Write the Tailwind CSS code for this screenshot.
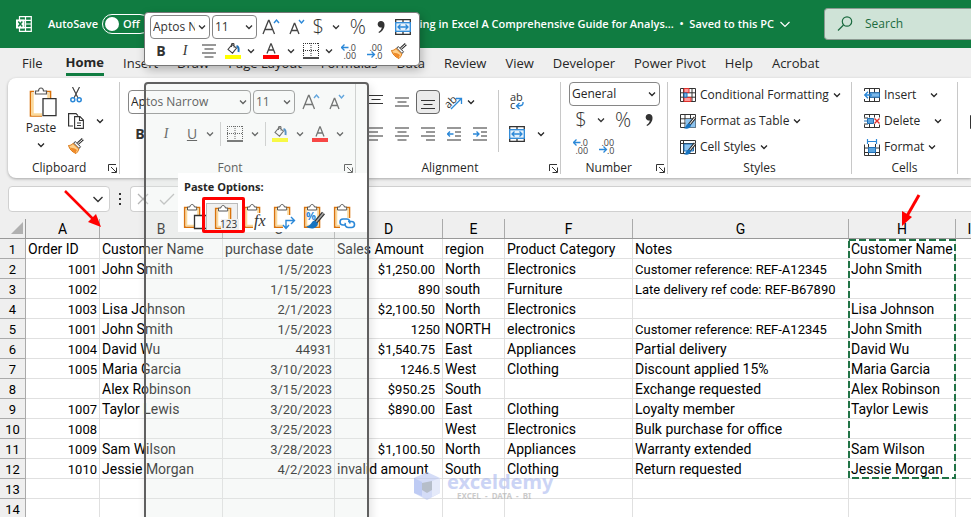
<!DOCTYPE html>
<html lang="en">
<head>
    <meta charset="UTF-8">
    <meta name="viewport" content="width=device-width, initial-scale=1.0">
    <title>Data Cleaning in Excel</title>
    <script src="https://cdn.jsdelivr.net/npm/@tailwindcss/browser@4"></script>
</head>
<body class="relative h-screen overflow-hidden bg-[#efefef] font-['Open_Sans','Noto_Sans',sans-serif] text-xs text-[#262626]">

    <!-- Icon set -->
    <svg class="hidden">
        <symbol id="chev" viewBox="0 0 8 6"><path d="M1 1.5l3 3 3-3" fill="none" stroke="currentColor" stroke-width="1.3"/></symbol>
        <symbol id="launcher" viewBox="0 0 9 9"><path d="M.5 7V.5H8M3 3l5 5M8.500 3.500v5h-5" fill="none" stroke="#333"/></symbol>
        <symbol id="grow" viewBox="0 0 18 18"><path d="M1 16L6.500 2.500h.6L12.500 16M3 11.500h7.800" fill="none" stroke="#444" stroke-width="1.3"/><path d="M12 5l2.500-3L17 5" fill="none" stroke="#2b88d8" stroke-width="1.4"/></symbol>
        <symbol id="shrink" viewBox="0 0 18 18"><path d="M2 16L6.300 5.500h.5L11 16M3.500 12.500h6" fill="none" stroke="#444" stroke-width="1.3"/><path d="M11 2l2.500 3L16 2" fill="none" stroke="#2b88d8" stroke-width="1.4"/></symbol>
        <symbol id="fill" viewBox="0 0 16 16"><rect y="12" width="16" height="4" fill="#ff0"/><path d="M7 1.500L3 6.500l4.500 3.700 4-5.200L7 1.500zM6.500 4V1.500c0-1.500 2.500-1.500 2.500 0v3" fill="none" stroke="#444" stroke-width="1.1"/><path d="M11.500 3c2 .5 2.500 2.500 2 6" fill="none" stroke="#1f6fb5" stroke-width="2"/></symbol>
        <symbol id="fontcolor" viewBox="0 0 16 16"><rect y="12" width="16" height="4" fill="red"/><path d="M4 10.500L7.800 .8h.4L12 10.500M5.300 7h5.400" fill="none" stroke="#444" stroke-width="1.3"/></symbol>
        <symbol id="borders" viewBox="0 0 16 16"><path d="M0 .5h16M.5 0v14M15.500 0v14M8 0v14M0 7.500h16" fill="none" stroke="#333" stroke-dasharray="1 1"/><path d="M0 15h16" stroke="#111" stroke-width="1.500"/></symbol>
        <symbol id="merge" viewBox="0 0 16 16"><path d="M.7 3.500V.7h14.600v2.800M8 .7v2.500M.7 12.500v2.800h14.600v-2.800M8 12.800v2.500" fill="none" stroke="#333" stroke-width="1.3"/><rect x=".7" y="3.700" width="14.600" height="8.600" fill="#e6f2fb" stroke="#2b88d8" stroke-width="1.3"/><path d="M3 8h10M5.500 5.500L3 8l2.500 2.500M10.500 5.500L13 8l-2.500 2.500" fill="none" stroke="#2b88d8" stroke-width="1.3"/></symbol>
        <symbol id="incdec" viewBox="0 0 16 16"><path d="M0.500 4.500h7M3.500 1.500l-3 3 3 3" fill="none" stroke="#2b88d8" stroke-width="1.3"/><text x="7.500" y="7.500" font-size="9" fill="#444">.0</text><text x="2.500" y="16" font-size="9" fill="#444">.00</text></symbol>
        <symbol id="decdec" viewBox="0 0 16 16"><path d="M0 11.500h7M4.500 8.500l3 3-3 3" fill="none" stroke="#2b88d8" stroke-width="1.3"/><text x="2.500" y="7.500" font-size="9" fill="#444">.00</text><text x="8" y="16" font-size="9" fill="#444">.0</text></symbol>
        <symbol id="brush" viewBox="0 0 16 16"><path d="M14.800 1.200L10 5.500" stroke="#333" stroke-width="3"/><path d="M14.600 1.400L10 5.500" stroke="#fff" stroke-width="1"/><path d="M5.500 5l5.500 5.500 1.500-1.800L7.300 3.700z" fill="#fff" stroke="#333"/><path d="M5 5.500C3.500 7 2 7.500.5 7.500c1 3.500 3.500 6.500 7.500 8 1.500-1.300 2.500-3 2.800-4.500z" fill="#ffd08a" stroke="#d9730d"/><path d="M2 9.500c3 .8 5 .5 7 2.500-1 1.500-1 2.500-1.500 3.200C5 14 3 12 2 9.500z" fill="#ef8a28"/></symbol>
        <symbol id="center" viewBox="0 0 14 14"><path d="M0 1h14M2.500 5h9M0 9h14M2.500 13h9" stroke="#333" stroke-width="1.2"/></symbol>
        <symbol id="left" viewBox="0 0 14 14"><path d="M0 1h14M0 5h9M0 9h14M0 13h9" stroke="#333" stroke-width="1.2"/></symbol>
        <symbol id="right" viewBox="0 0 14 14"><path d="M0 1h14M5 5h9M0 9h14M5 13h9" stroke="#333" stroke-width="1.2"/></symbol>
        <symbol id="vtop" viewBox="0 0 14 14"><path d="M0 .5h14M2.500 4.500h9M0 8.500h14" stroke="#333" stroke-width="1.2"/></symbol>
        <symbol id="vmid" viewBox="0 0 14 14"><path d="M0 3h14M2.500 7h9M0 11h14" stroke="#333" stroke-width="1.2"/></symbol>
        <symbol id="vbot" viewBox="0 0 14 14"><path d="M0 5.500h14M2.500 9.500h9M0 13.500h14" stroke="#333" stroke-width="1.2"/></symbol>
        <symbol id="outdent" viewBox="0 0 14 14"><path d="M0 1h14M8 5h6M8 9h6M0 13h14" stroke="#333" stroke-width="1.2"/><path d="M0.500 7h6M3 4.500L.5 7 3 9.500" fill="none" stroke="#2b88d8" stroke-width="1.3"/></symbol>
        <symbol id="indent" viewBox="0 0 14 14"><path d="M0 1h14M8 5h6M8 9h6M0 13h14" stroke="#333" stroke-width="1.2"/><path d="M0 7h6M3.500 4.500L6 7 3.500 9.500" fill="none" stroke="#2b88d8" stroke-width="1.3"/></symbol>
        <symbol id="orient" viewBox="0 0 18 18"><text x="-1" y="13" font-size="11" fill="#333" transform="rotate(-45 5 9)">ab</text><path d="M6 16L16 6M11 5.500h5.500V11" fill="none" stroke="#2b88d8" stroke-width="1.3"/></symbol>
        <symbol id="wrap" viewBox="0 0 16 18"><text x="1" y="8" font-size="11" fill="#333">ab</text><text x="1" y="16" font-size="11" fill="#333">c</text><path d="M14 9c.5 3-1 4-6 4M10.500 10L7.500 13l3 3" fill="none" stroke="#2b88d8" stroke-width="1.4"/></symbol>
        <symbol id="clip" viewBox="0 0 28 28"><path d="M6 4.500H2.700v19.800H17.500V4.500H14" fill="#fff" stroke="#d9730d" stroke-width="1.6"/><path d="M4.500 6h11.500v16.500H4.500z" fill="none" stroke="#fbd99a" stroke-width="1.6"/><path d="M5.500 7V4h2.300c.3-3.300 4.300-3.300 4.600 0h2.300v3z" fill="#fff" stroke="#555"/></symbol>
        <symbol id="condfmt" viewBox="0 0 16 14"><path d="M.5.5h15v13H.5zM.5 4.800h15M.5 9.200h15M3.500.5v13M12 .5v13" fill="#fff" stroke="#333"/><path d="M4 .5h5v4H4zM4 9.500h7v4H4z" fill="#ff9a9a" stroke="#e0302c"/><path d="M4 5h3v4.200H4z" fill="#7db8e8" stroke="#1f6fb5"/></symbol>
        <symbol id="fmttable" viewBox="0 0 16 15"><path d="M.5.5h15v13H.5zM.5 4.800h15M.5 9.200h15M5 .5v13M10.500.5v13" fill="#fff" stroke="#333"/><path d="M5.500 5h10v8.500h-10z" fill="#8cc3ef"/><path d="M15 3.500L9 11" stroke="#333" stroke-width="3"/><path d="M15 3.500L9 11" stroke="#fff"/><path d="M9.500 9.500c-4 0-2.500 4-6 4.500 3 1.500 7 .8 7.500-3z" fill="#1673c0"/></symbol>
        <symbol id="cellstyle" viewBox="0 0 16 15"><path d="M.5.5h15v13H.5zM.5 3.500h15M3.500.5v13" fill="#fff" stroke="#333"/><path d="M4 4h9.500v7H4z" fill="#8cc3ef" stroke="#1f6fb5"/><path d="M15 3.500L9 11" stroke="#333" stroke-width="3"/><path d="M15 3.500L9 11" stroke="#fff"/><path d="M9.500 9.500c-4 0-2.500 4-6 4.500 3 1.500 7 .8 7.500-3z" fill="#1673c0"/></symbol>
        <symbol id="insert" viewBox="0 0 16 14"><path d="M.5 3V.5h15v13H.5V11M5.500.5v13M10.500.5v13M5 4.800h10.500M5 9.200h10.500" fill="none" stroke="#333"/><path d="M6 4.800h9.500v4.400H6z" fill="#7db8e8" stroke="#1f6fb5"/><path d="M0.800 7H8M4 3.800L.8 7 4 10.200" fill="none" stroke="#2b88d8" stroke-width="1.4"/></symbol>
        <symbol id="delete" viewBox="0 0 16 14"><path d="M.5 3.500V.5h15v3M.5 10.500v3h15v-3M5.500.5v3M10.500.5v3M5.500 10v3.500M10.500 10v3.500M0 4h4M0 10h4" fill="none" stroke="#333"/><path d="M3.500 4.500h6v5h-6zM0 7h3.500" fill="#5aa5e0" stroke="#1f6fb5"/><path d="M10.500 4.500l5 5M15.500 4.500l-5 5" stroke="#e0302c" stroke-width="1.400"/></symbol>
        <symbol id="format" viewBox="0 0 16 17"><path d="M.5 5.500v11h15v-11M.5 9h15M.5 13.500h15M4.500 5v11.500M11.500 5v11.500" fill="none" stroke="#333"/><path d="M4.500 8.500h7v5h-7z" fill="#5aa5e0" stroke="#1f6fb5"/><path d="M3 2.500h10M3.500 0v5M12.500 0v5" stroke="#2b88d8" stroke-width="1.2"/></symbol>
    </svg>

    <!-- Title bar -->
    <header class="flex h-12 items-center bg-[#107c41] pl-4 text-white">
        <svg class="size-4 shrink-0" viewBox="0 0 16 16"><path d="M3.500.7h11.800v14.600H3.500zM3.500 4.300h12M9 8h6.500M3.500 11.700h12M9.500.7v14.600" fill="none" stroke="#fff" stroke-width="1.2"/><path d="M0 3.500h8.500v9H0z" fill="#fff"/><path d="M2.300 5.500l4 5M6.300 5.500l-4 5" stroke="#107c41" stroke-width="1.4"/></svg>
        <label for="autosave" class="ml-4 text-[11px] font-semibold">AutoSave</label>
        <button id="autosave" role="switch" aria-checked="false" class="ml-1 flex h-5 w-12 shrink-0 items-center gap-1 rounded-full border border-white pl-0.5 text-[11px] font-semibold"><span class="size-3.5 shrink-0 rounded-full bg-white"></span>Off</button>
        <div class="flex min-w-0 flex-1 items-center justify-end gap-1.5 whitespace-nowrap text-[11px] font-semibold">
            <span>Data Cleaning in Excel A Comprehensive Guide for Analys... &nbsp;•&nbsp; Saved to this PC</span>
            <svg class="h-2 w-2.5" viewBox="0 0 10 8"><path d="M.5 2L5 6.500 9.500 2" fill="none" stroke="#fff" stroke-width="1.2"/></svg>
        </div>
        <label class="ml-[34px] flex h-8 w-[147px] shrink-0 items-center rounded-l border border-r-0 border-[#8c9a92] bg-[#cfe3d7] pl-3">
            <svg class="size-4 shrink-0" viewBox="0 0 16 16"><circle cx="10" cy="5.500" r="4.700" fill="none" stroke="#1c6b40" stroke-width="1.2"/><path d="M6.500 9L1 14.500" stroke="#1c6b40" stroke-width="1.300"/></svg>
            <input type="text" aria-label="Search" placeholder="Search" class="ml-3 w-20 text-xs outline-none placeholder:text-[#1c6b40]">
        </label>
    </header>

    <!-- Ribbon tabs -->
    <nav class="flex h-[30px] items-center gap-[19px] pl-[22px] text-[13px] leading-[22px] whitespace-nowrap">
        <a href="#">File</a>
        <a href="#" class="ml-1 border-b-3 border-[#107c41] font-bold">Home</a>
        <a href="#">Insert</a>
        <a href="#">Draw</a>
        <a href="#">Page Layout</a>
        <a href="#">Formulas</a>
        <a href="#">Data</a>
        <a href="#">Review</a>
        <a href="#">View</a>
        <a href="#">Developer</a>
        <a href="#">Power Pivot</a>
        <a href="#">Help</a>
        <a href="#">Acrobat</a>
    </nav>

    <!-- Ribbon -->
    <section class="ml-2 flex overflow-hidden rounded-l-lg bg-white py-1 shadow-[0_1px_3px_rgba(0,0,0,0.3)]">
        <div class="flex h-[92px] w-28 shrink-0 flex-col border-r border-[#c8c8c8]">
            <div class="flex flex-1">
                <button class="ml-3 flex w-[42px] flex-col items-center pt-1">
                    <svg class="h-8 w-8" viewBox="0 0 32 32"><path d="M9 5.500H5.500v24.500H17M21 5.500h4.500V12" fill="none" stroke="#d9730d" stroke-width="1.600"/><path d="M7.500 7v21.500H17M23.500 7v5" fill="none" stroke="#fbd99a" stroke-width="2.500"/><path d="M10.500 8V5h3c.3-4 4.700-4 5 0h3v3z" fill="#fff" stroke="#555" stroke-width="1.200"/><path d="M18 12.700h13v17H18z" fill="#fff" stroke="#333" stroke-width="1.300"/></svg>
                    <span class="mt-0.5 leading-4">Paste</span>
                    <svg class="mt-1.5 h-1.5 w-2"><use href="#chev"/></svg>
                </button>
                <div class="ml-1.5 flex flex-col">
                    <button class="flex h-[26px] w-4 items-center justify-center" aria-label="Cut"><svg class="h-4 w-3" viewBox="0 0 12 16"><path d="M2.500 0l5.500 11M9.500 0L4 11" stroke="#444" stroke-width="1.200"/><circle cx="2.800" cy="12.800" r="2" fill="#fff" stroke="#2b88d8" stroke-width="1.500"/><circle cx="9.200" cy="12.800" r="2" fill="#fff" stroke="#2b88d8" stroke-width="1.500"/></svg></button>
                    <button class="flex h-[26px] items-center gap-3" aria-label="Copy"><svg class="size-4" viewBox="0 0 16 16"><path d="M5 13H.6V.6H8l2 2" fill="none" stroke="#333" stroke-width="1.200"/><path d="M6.600 3.600H12l3.400 3.400v8.400H6.600zM11.500 4v3.500h3.500M9 10h4M9 12.500h4" fill="#fff" stroke="#333" stroke-width="1.100"/></svg><svg class="h-1.5 w-2"><use href="#chev"/></svg></button>
                    <button class="flex h-6 items-center" aria-label="Format Painter"><svg class="size-4"><use href="#brush"/></svg></button>
                </div>
            </div>
            <div class="flex h-3 items-center pl-6 leading-3"><span class="flex-1">Clipboard</span><button class="mr-0.5" aria-label="Clipboard settings"><svg class="size-[9px]"><use href="#launcher"/></svg></button></div>
        </div>

        <div class="flex h-[92px] w-[236px] shrink-0 flex-col border-r border-[#c8c8c8] pl-2">
            <div class="flex-1 pt-2">
                <div class="flex h-6 items-center">
                    <label class="relative flex h-6 w-[123px] items-center"><select aria-label="Font" class="h-6 w-full appearance-none rounded border border-[#868686] bg-white pl-0.5 text-xs"><option>Aptos Narrow</option></select><svg class="absolute right-1 h-1.5 w-2"><use href="#chev"/></svg></label>
                    <label class="relative ml-0.5 flex h-6 w-[42px] items-center"><select aria-label="Font size" class="h-6 w-full appearance-none rounded border border-[#868686] bg-white pl-0.5 text-xs"><option>11</option></select><svg class="absolute right-1 h-1.5 w-2"><use href="#chev"/></svg></label>
                    <button class="flex w-8 justify-center" aria-label="Increase font size"><svg class="size-[18px]"><use href="#grow"/></svg></button>
                    <button class="flex w-5 justify-center" aria-label="Decrease font size"><svg class="size-[18px]"><use href="#shrink"/></svg></button>
                </div>
                <div class="mt-2 flex h-6 items-center text-sm text-[#333]">
                    <button class="w-6 font-bold">B</button>
                    <button class="w-7 font-['Liberation_Serif',serif] italic">I</button>
                    <button class="w-6 underline">U</button>
                    <button class="flex w-3 justify-center" aria-label="Underline options"><svg class="h-1.5 w-2"><use href="#chev"/></svg></button>
                    <span class="ml-1 h-6 w-px bg-[#c8c8c8]"></span>
                    <button class="flex w-7 justify-center" aria-label="Borders"><svg class="size-4"><use href="#borders"/></svg></button>
                    <button class="flex w-3 justify-center" aria-label="Border options"><svg class="h-1.5 w-2"><use href="#chev"/></svg></button>
                    <span class="ml-1 h-6 w-px bg-[#c8c8c8]"></span>
                    <button class="flex w-7 justify-center" aria-label="Fill color"><svg class="size-4"><use href="#fill"/></svg></button>
                    <button class="flex w-3 justify-center" aria-label="Fill options"><svg class="h-1.5 w-2"><use href="#chev"/></svg></button>
                    <button class="flex w-7 justify-center" aria-label="Font color"><svg class="size-4"><use href="#fontcolor"/></svg></button>
                    <button class="flex w-3 justify-center" aria-label="Font color options"><svg class="h-1.5 w-2"><use href="#chev"/></svg></button>
                </div>
            </div>
            <div class="flex h-3 items-center leading-3"><span class="flex-1 pr-3 text-center">Font</span><button class="mr-0.5" aria-label="Font settings"><svg class="size-[9px]"><use href="#launcher"/></svg></button></div>
        </div>

        <div class="flex h-[92px] w-[205px] shrink-0 flex-col border-r border-[#c8c8c8] pl-[7px]">
            <div class="flex flex-1 pt-2">
                <div class="w-[135px]">
                    <div class="flex h-6 items-center">
                        <button class="flex w-[26px] justify-center" aria-label="Top align"><svg class="size-3.5"><use href="#vtop"/></svg></button>
                        <button class="flex w-[26px] justify-center" aria-label="Middle align"><svg class="size-3.5"><use href="#vmid"/></svg></button>
                        <button class="mx-px flex size-6 items-center justify-center rounded border border-[#666] bg-[#ebebeb]" aria-label="Bottom align"><svg class="size-3.5"><use href="#vbot"/></svg></button>
                        <button class="flex w-[26px] justify-center" aria-label="Orientation"><svg class="size-[18px]"><use href="#orient"/></svg></button>
                        <button class="flex w-2 justify-center" aria-label="Orientation options"><svg class="h-1.5 w-2"><use href="#chev"/></svg></button>
                    </div>
                    <div class="mt-2 flex h-6 items-center">
                        <button class="flex w-[26px] justify-center" aria-label="Align left"><svg class="size-3.5"><use href="#left"/></svg></button>
                        <button class="flex w-[26px] justify-center" aria-label="Center"><svg class="size-3.5"><use href="#center"/></svg></button>
                        <button class="flex w-[26px] justify-center" aria-label="Align right"><svg class="size-3.5"><use href="#right"/></svg></button>
                        <button class="flex w-[26px] justify-center" aria-label="Decrease indent"><svg class="size-3.5"><use href="#outdent"/></svg></button>
                        <button class="flex w-[26px] justify-center" aria-label="Increase indent"><svg class="size-3.5"><use href="#indent"/></svg></button>
                    </div>
                </div>
                <div class="h-[62px] border-l border-[#c8c8c8] pl-2.5">
                    <button class="flex h-6 items-center" aria-label="Wrap text"><svg class="h-[18px] w-4"><use href="#wrap"/></svg></button>
                    <div class="mt-2 flex h-6 items-center gap-3">
                        <button aria-label="Merge and center"><svg class="size-4"><use href="#merge"/></svg></button>
                        <button aria-label="Merge options"><svg class="h-1.5 w-2"><use href="#chev"/></svg></button>
                    </div>
                </div>
            </div>
            <div class="flex h-3 items-center leading-3"><span class="flex-1 pr-3 text-center">Alignment</span><button class="mr-0.5" aria-label="Alignment settings"><svg class="size-[9px]"><use href="#launcher"/></svg></button></div>
        </div>

        <div class="flex h-[92px] w-[107px] shrink-0 flex-col border-r border-[#c8c8c8] pl-2">
            <div class="flex-1">
                <label class="relative flex h-6 w-[91px] items-center"><select aria-label="Number format" class="h-6 w-full appearance-none rounded border border-[#868686] bg-white pl-0.5 text-xs"><option>General</option></select><svg class="absolute right-1 h-1.5 w-2"><use href="#chev"/></svg></label>
                <div class="flex h-7 items-center text-xl font-light text-[#333]">
                    <button class="w-6">$</button>
                    <button class="flex w-4 justify-center" aria-label="Accounting options"><svg class="h-1.5 w-2"><use href="#chev"/></svg></button>
                    <button class="w-7">%</button>
                    <button class="flex w-6 justify-center" aria-label="Comma style"><svg class="h-3 w-2" viewBox="0 0 8 12"><path d="M4 0a3.300 3.300 0 1 0 .8 6.500C4.500 8.500 3 10 1.500 11l.5 1C5 10.500 7.700 7.500 7.500 3.500 7.400 1.200 6 0 4 0z" fill="#333"/></svg></button>
                </div>
                <div class="flex h-6 items-center">
                    <button class="flex w-6 justify-center" aria-label="Increase decimal"><svg class="size-4"><use href="#incdec"/></svg></button>
                    <button class="flex w-7 justify-center" aria-label="Decrease decimal"><svg class="size-4"><use href="#decdec"/></svg></button>
                </div>
            </div>
            <div class="flex h-3 items-center leading-3"><span class="flex-1 pr-3 text-right">Number</span><button class="mr-0.5 ml-3" aria-label="Number settings"><svg class="size-[9px]"><use href="#launcher"/></svg></button></div>
        </div>

        <div class="flex h-[92px] w-[184px] shrink-0 flex-col border-r border-[#c8c8c8] pl-3 whitespace-nowrap">
            <div class="flex-1">
                <button class="flex h-[26px] items-center gap-1"><svg class="h-3.5 w-4"><use href="#condfmt"/></svg>Conditional Formatting<svg class="h-1.5 w-2"><use href="#chev"/></svg></button>
                <button class="flex h-[26px] items-center gap-1"><svg class="h-[15px] w-4"><use href="#fmttable"/></svg>Format as Table<svg class="h-1.5 w-2"><use href="#chev"/></svg></button>
                <button class="flex h-[26px] items-center gap-1"><svg class="h-[15px] w-4"><use href="#cellstyle"/></svg>Cell Styles<svg class="h-1.5 w-2"><use href="#chev"/></svg></button>
            </div>
            <div class="h-3 pr-3 text-center leading-3">Styles</div>
        </div>

        <div class="flex h-[92px] w-[106px] shrink-0 flex-col border-r border-[#c8c8c8] pl-3 whitespace-nowrap">
            <div class="flex-1">
                <button class="flex h-[26px] w-[74px] items-center gap-1"><svg class="h-3.5 w-4"><use href="#insert"/></svg>Insert<svg class="ml-auto h-1.5 w-2"><use href="#chev"/></svg></button>
                <button class="flex h-[26px] w-[78px] items-center gap-1"><svg class="h-3.5 w-4"><use href="#delete"/></svg>Delete<svg class="ml-auto h-1.5 w-2"><use href="#chev"/></svg></button>
                <button class="flex h-[26px] items-center gap-1"><svg class="h-[17px] w-4"><use href="#format"/></svg>Format<svg class="h-1.5 w-2"><use href="#chev"/></svg></button>
            </div>
            <div class="h-3 pr-3 text-center leading-3">Cells</div>
        </div>

        <div class="flex flex-1 flex-col pt-8 pl-3"><button aria-label="Fill"><svg class="size-4" viewBox="0 0 16 16"><path d="M.5 1.500h14v13H.5z" fill="none" stroke="#333"/></svg></button></div>
    </section>

    <!-- Formula bar -->
    <section class="mt-2 flex h-[26px] pl-2">
        <label class="flex w-[102px] items-center rounded border border-[#d0d0d0] bg-white pr-1.5">
            <input type="text" aria-label="Name box" class="w-20 flex-1 outline-none">
            <svg class="h-2 w-2.5" viewBox="0 0 10 8"><path d="M.5 2L5 6.500 9.500 2" fill="none" stroke="#333" stroke-width="1.400"/></svg>
        </label>
        <div class="flex w-5 flex-col items-center justify-center gap-[3px]"><span class="size-0.5 bg-[#333]"></span><span class="size-0.5 bg-[#333]"></span><span class="size-0.5 bg-[#333]"></span></div>
        <div class="flex flex-1 items-center gap-2.5 rounded-l border border-r-0 border-[#d0d0d0] bg-white pl-1.5">
            <button aria-label="Cancel"><svg class="size-3" viewBox="0 0 12 12"><path d="M1 1l10 10M11 1L1 11" stroke="#b5b5b5" stroke-width="1.300"/></svg></button>
            <button aria-label="Enter"><svg class="h-3 w-4" viewBox="0 0 16 12"><path d="M1 7l4 4L15 1" fill="none" stroke="#b5b5b5" stroke-width="1.300"/></svg></button>
            <input type="text" aria-label="Formula" class="flex-1 outline-none">
        </div>
    </section>

    <!-- Worksheet -->
    <table class="w-[984px] table-fixed border-separate border-spacing-0 bg-white font-['Roboto','Open_Sans',sans-serif] text-sm whitespace-nowrap text-black">
        <colgroup>
            <col class="w-[26px]"><col class="w-[74px]"><col class="w-[123px]"><col class="w-28"><col class="w-[108px]"><col class="w-[62px]"><col class="w-32"><col class="w-[216px]"><col class="w-[107px]"><col class="w-7">
        </colgroup>
        <thead><tr id="head" class="bg-[#efefef]"></tr></thead>
        <tbody id="rows"></tbody>
    </table>

    <!-- Watermark -->
    <div class="absolute top-[472px] left-[413px] flex items-center gap-1.5 opacity-60">
        <svg class="h-7 w-7" viewBox="0 0 28 28"><path d="M14 0l13 6v15l-13 7-13-7V6z" fill="#b9c6f2"/><path d="M1 6l8 4v14l-8-3z" fill="#94a9ee"/><path d="M9 11l10-2v9l-5 3-5-3z" fill="#8793a8"/><path d="M19 9l8-3v15l-8 4z" fill="#d5ddf8"/></svg>
        <div class="font-['Noto_Sans',sans-serif]">
            <div class="text-xl leading-5 font-bold text-[#aab8f0]">exceldemy</div>
            <div class="pl-2.5 text-[8px] leading-2 font-bold text-[#aaa]">EXCEL &nbsp;- &nbsp;DATA &nbsp;- &nbsp;BI</div>
        </div>
    </div>

    <!-- Context menu, faded except for the paste options -->
    <div class="absolute top-[82px] -bottom-2 left-[144px] w-[225px] rounded border-2 border-[#606060] bg-[#e6ebe9]/30 shadow-[2px_4px_10px_rgba(0,0,0,0.12)]">
        <div class="mt-[89px] ml-8 h-[59px] bg-white">
            <h2 class="pt-1.5 pl-1.5 text-[11px] leading-4 font-bold">Paste Options:</h2>
            <div class="mt-2 flex h-7">
                <button class="w-7 pl-1" aria-label="Paste"><svg class="size-7" viewBox="0 0 28 28"><use href="#clip" width="28" height="28"/><path d="M12.500 12.500h12v13h-12z" fill="#fff" stroke="#333" stroke-width="1.300"/></svg></button>
                <button class="w-8 border border-[#bbb] bg-[#f0f0f0] pl-1.5" aria-label="Values"><svg class="size-7" viewBox="0 0 28 28"><use href="#clip" width="28" height="28"/><path d="M8 15h18v11H8z" fill="#f0f0f0"/><text x="7" y="24" font-size="10" fill="#333">123</text></svg></button>
                <button class="w-[30px] pl-1" aria-label="Formulas"><svg class="size-7" viewBox="0 0 28 28"><use href="#clip" width="28" height="28"/><path d="M11 10h10v16H11z" fill="#fff"/><text x="12" y="23" font-size="16" font-style="italic" font-family="Liberation Serif" fill="#333">fx</text></svg></button>
                <button class="w-[30px] pl-1" aria-label="Transpose"><svg class="size-7" viewBox="0 0 28 28"><use href="#clip" width="28" height="28"/><path d="M11 12h12v14H11z" fill="#fff"/><path d="M14 25v-7.500h8M11 22l3 3.500 3-3.500M19 14l3.500 3.500L19 21" fill="none" stroke="#2b88d8" stroke-width="1.400"/></svg></button>
                <button class="w-[30px] pl-1" aria-label="Formatting"><svg class="size-7" viewBox="0 0 28 28"><use href="#clip" width="28" height="28"/><text x="4" y="17" font-size="11" font-weight="bold" fill="#2b88d8">%</text><path d="M21.500 10L13 20" stroke="#333" stroke-width="4"/><path d="M21.500 10L14 19" stroke="#aaa" stroke-width="1.500"/><path d="M13 17.500c-4 0-3 5-9 6 4 3 11 3 12-3z" fill="#1673c0"/></svg></button>
                <button class="w-[30px] pl-1" aria-label="Paste link"><svg class="size-7" viewBox="0 0 28 28"><use href="#clip" width="28" height="28"/><path d="M8 15h16v11H8z" fill="#fff"/><path d="M13 22h-2a3 3 0 0 1 0-6h4a3 3 0 0 1 2.500 4.500M16 18.500h3.500a3 3 0 0 1 0 6H16a3 3 0 0 1-2.500-4.500" fill="none" stroke="#2b88d8" stroke-width="1.600"/></svg></button>
            </div>
        </div>
    </div>
    <div class="absolute top-[197px] left-[202px] h-9 w-[43px] rounded-xs border-3 border-[#f00]"></div>

    <!-- Arrows -->
    <svg class="absolute top-[188px] left-[62px] h-10 w-10" viewBox="0 0 40 40"><path d="M3 3l28 28" stroke="red" stroke-width="2.500"/><path d="M39 39l-13-5 8-8z" fill="red"/></svg>
    <svg class="absolute top-[192px] left-[898px] h-9 w-6" viewBox="0 0 24 36"><path d="M21 3L9 24" stroke="red" stroke-width="3"/><path d="M4 34l0-15 10 6z" fill="red"/></svg>

    <!-- Mini toolbar -->
    <div class="absolute top-3 left-[144px] w-[276px] rounded border border-[#777] bg-white px-1 pt-0.5 pb-0.5 shadow-[2px_4px_10px_rgba(0,0,0,0.25)]">
        <div class="flex h-6 items-center pl-px text-xl font-light text-[#333]">
            <label class="relative flex h-6 w-[60px] shrink-0 items-center"><select aria-label="Font name" class="h-6 w-full appearance-none rounded border border-[#868686] bg-white pr-3.5 pl-0.5 text-xs font-normal"><option>Aptos Narrow</option></select><svg class="absolute right-1 h-1.5 w-2"><use href="#chev"/></svg></label>
            <label class="relative ml-0.5 flex h-6 w-[45px] shrink-0 items-center"><select aria-label="Size" class="h-6 w-full appearance-none rounded border border-[#868686] bg-white pl-0.5 text-xs font-normal"><option>11</option></select><svg class="absolute right-1 h-1.5 w-2"><use href="#chev"/></svg></label>
            <button class="flex w-7 justify-center" aria-label="Grow font"><svg class="size-[18px]"><use href="#grow"/></svg></button>
            <button class="flex w-6 justify-center" aria-label="Shrink font"><svg class="size-[18px]"><use href="#shrink"/></svg></button>
            <button class="w-5">$</button>
            <button class="flex w-4 justify-center" aria-label="Currency options"><svg class="h-1.5 w-2"><use href="#chev"/></svg></button>
            <button class="w-7">%</button>
            <button class="flex w-5 justify-center" aria-label="Comma"><svg class="h-3 w-2" viewBox="0 0 8 12"><path d="M4 0a3.300 3.300 0 1 0 .8 6.500C4.500 8.500 3 10 1.500 11l.5 1C5 10.500 7.700 7.500 7.500 3.500 7.400 1.200 6 0 4 0z" fill="#333"/></svg></button>
            <button class="flex w-6 justify-center" aria-label="Merge"><svg class="size-4"><use href="#merge"/></svg></button>
        </div>
        <div class="flex h-6 items-center text-sm text-[#333]">
            <button class="w-6 font-bold">B</button>
            <button class="w-6 font-['Liberation_Serif',serif] italic">I</button>
            <button class="flex w-6 justify-center" aria-label="Align center"><svg class="size-3.5"><use href="#center"/></svg></button>
            <button class="flex w-6 justify-center" aria-label="Fill"><svg class="size-4"><use href="#fill"/></svg></button>
            <button class="flex w-3 justify-center" aria-label="More fills"><svg class="h-1.5 w-2"><use href="#chev"/></svg></button>
            <button class="flex w-7 justify-center" aria-label="Text color"><svg class="size-4"><use href="#fontcolor"/></svg></button>
            <button class="flex w-3 justify-center" aria-label="More colors"><svg class="h-1.5 w-2"><use href="#chev"/></svg></button>
            <button class="flex w-7 justify-center" aria-label="Border"><svg class="size-4"><use href="#borders"/></svg></button>
            <button class="flex w-2 justify-center" aria-label="More borders"><svg class="h-1.5 w-2"><use href="#chev"/></svg></button>
            <button class="flex w-8 justify-center" aria-label="More decimals"><svg class="size-4"><use href="#incdec"/></svg></button>
            <button class="flex w-5 justify-center" aria-label="Fewer decimals"><svg class="size-4"><use href="#decdec"/></svg></button>
            <button class="flex w-7 justify-center" aria-label="Copy format"><svg class="size-4"><use href="#brush"/></svg></button>
        </div>
    </div>

    <script>
        const columns = ['A', 'B', 'C', 'D', 'E', 'F', 'G', 'H', 'I'];
        const data = [
            ['Order ID', 'Customer Name', 'purchase date', 'Sales Amount', 'region', 'Product Category', 'Notes'],
            ['1001', 'John Smith', '1/5/2023', '$1,250.00', 'North', 'Electronics', 'Customer reference: REF-A12345'],
            ['1002', '', '1/15/2023', '890', 'south', 'Furniture', 'Late delivery ref code: REF-B67890'],
            ['1003', 'Lisa Johnson', '2/1/2023', '$2,100.50', 'North', 'Electronics', ''],
            ['1001', 'John Smith', '1/5/2023', '1250', 'NORTH', 'electronics', 'Customer reference: REF-A12345'],
            ['1004', 'David Wu', '44931', '$1,540.75', 'East', 'Appliances', 'Partial delivery'],
            ['1005', 'Maria Garcia', '3/10/2023', '1246.5', 'West', 'Clothing', 'Discount applied 15%'],
            ['', 'Alex Robinson', '3/15/2023', '$950.25', 'South', '', 'Exchange requested'],
            ['1007', 'Taylor Lewis', '3/20/2023', '$890.00', 'East', 'Clothing', 'Loyalty member'],
            ['1008', '', '3/25/2023', '', 'West', 'Electronics', 'Bulk purchase for office'],
            ['1009', 'Sam Wilson', '3/28/2023', '$1,100.50', 'North', 'Appliances', 'Warranty extended'],
            ['1010', 'Jessie Morgan', '4/2/2023', 'invalid amount', 'South', 'Clothing', 'Return requested'],
            [],
            []
        ];

        // Column headers
        document.getElementById('head').innerHTML =
            '<th class="h-[27px] border-b border-[#999] p-0 pt-[7px] align-top"><div class="flex h-[19px] items-end justify-end border-r border-[#999] pr-0.5 pb-1"><svg class="size-3" viewBox="0 0 12 12"><path d="M12 0v12H0z" fill="#b0b0b0"/></svg></div></th>' +
            columns.map(c => `<th class="h-[27px] border-b border-[#999] p-0 pt-[7px] align-top"><div class="h-[19px] border-r border-[#aaa] leading-[21px] font-normal">${c}</div></th>`).join('');

        // The copied column gets a dashed outline that hangs off its first cell
        const outline = '<svg class="absolute top-0 -left-px h-[240px] w-[108px]"><rect x="1" y="1" width="106" height="238" fill="none" stroke="#217346" stroke-width="2" stroke-dasharray="7 3"/></svg>';

        document.getElementById('rows').innerHTML = data.map((row, r) => {
            const cells = columns.map((c, i) => {
                const value = (i === 7 ? row[1] : row[i]) || '';
                let cls = 'h-5 border-r border-b border-[#e0e0e0] p-0 pt-0.5 pl-0.5 leading-[17px]';
                if (/^\$/.test(value)) {
                    cls = 'h-5 border-r border-b border-[#e0e0e0] p-0 pt-0.5 pr-[7px] text-right text-[13px] leading-[17px]';
                } else if (/^\d/.test(value)) {
                    cls = 'h-5 border-r border-b border-[#e0e0e0] p-0 pt-0.5 pr-0.5 text-right text-[13px] leading-[17px]';
                } else if (/REF-/.test(value)) {
                    cls = 'h-5 border-r border-b border-[#e0e0e0] p-0 pt-0.5 pl-0.5 text-[13px] leading-[17px]';
                } else if (r === 0 && i === 7) {
                    cls = 'relative h-5 border-r border-b border-[#e0e0e0] p-0 pt-0.5 pl-0.5 leading-[17px]';
                }
                return `<td class="${cls}">${value}${r === 0 && i === 7 ? outline : ''}</td>`;
            }).join('');
            return `<tr><th class="h-5 border-r border-b border-[#aaa] bg-[#efefef] p-0 pt-0.5 text-[13px] leading-[17px] font-normal">${r + 1}</th>${cells}</tr>`;
        }).join('');
    </script>
</body>
</html>
